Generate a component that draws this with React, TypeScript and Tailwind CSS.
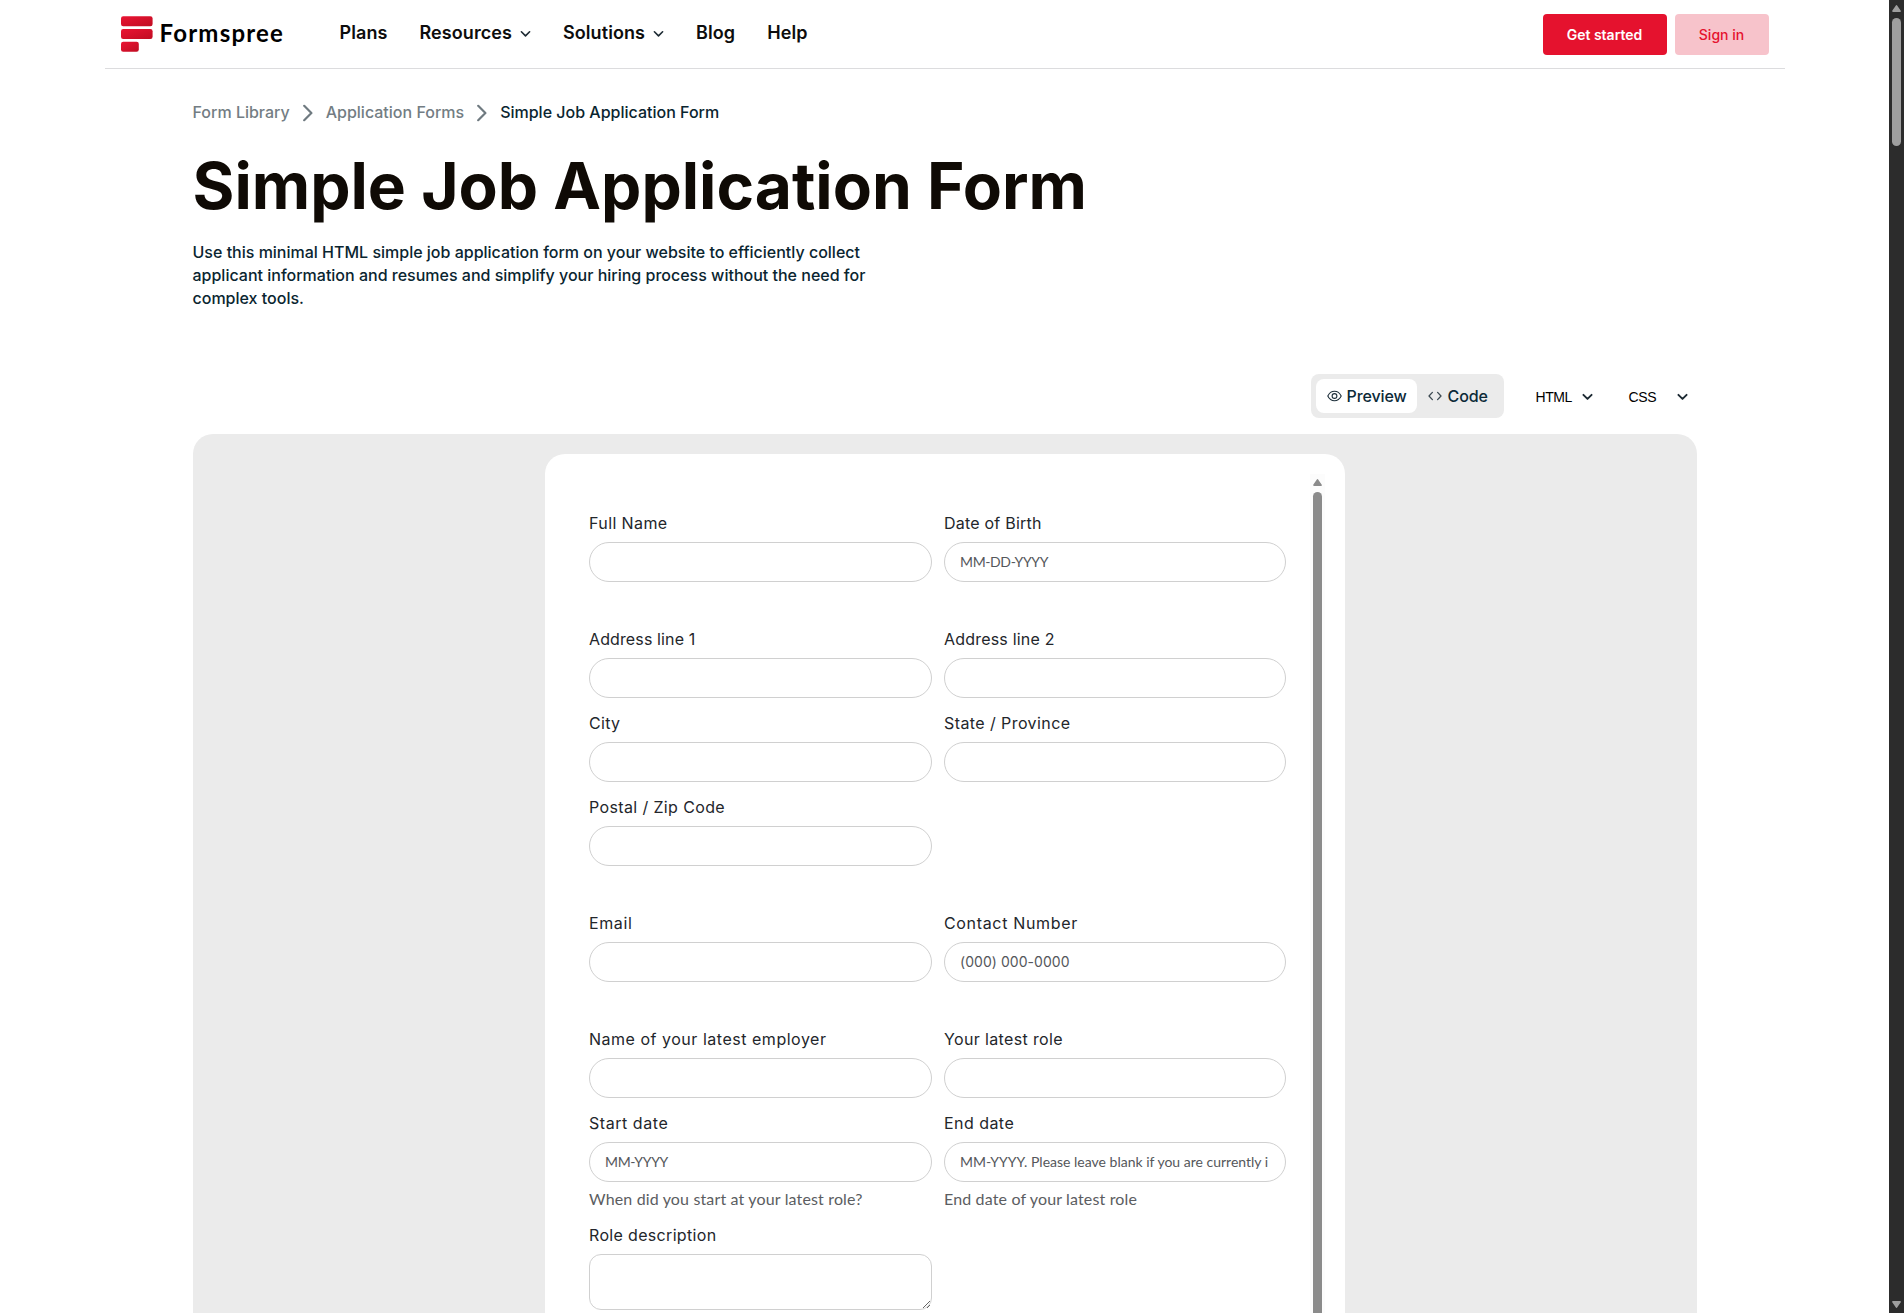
import type { ReactNode } from "react";

const inter = "font-['Inter',sans-serif]";

function Logo() {
  return (
    <div className="flex items-center">
      <svg width="32" height="36" viewBox="0 0 32 36" className="shrink-0">
        <defs>
          <linearGradient id="bar" x1="0" y1="0" x2="1" y2="1">
            <stop offset="0" stopColor="#ea1433" />
            <stop offset="1" stopColor="#c00d22" />
          </linearGradient>
        </defs>
        <rect x="0" y="0.2" width="31.6" height="10" rx="2.2" fill="url(#bar)" />
        <rect x="0" y="13" width="31.6" height="10" rx="2.2" fill="url(#bar)" />
        <rect x="0" y="25.7" width="17.8" height="10" rx="2.2" fill="url(#bar)" />
      </svg>
      <span className="-mt-[2px] ml-[7px] w-[124px] whitespace-nowrap font-['Lato',sans-serif] text-[24px] leading-[28px] font-bold tracking-[1.2px] text-black">
        Formspree
      </span>
    </div>
  );
}

function Chevron({ className, stroke = "#1d2a33", width = 1.6 }: { className?: string; stroke?: string; width?: number }) {
  return (
    <svg width="11" height="8" viewBox="0 0 11 8" fill="none" className={className}>
      <path d="M1.4 1.8 5.5 5.9 9.6 1.8" stroke={stroke} strokeWidth={width} strokeLinecap="round" strokeLinejoin="round" />
    </svg>
  );
}

function NavItem({ label, menu, className = "" }: { label: string; menu?: boolean; className?: string }) {
  return (
    <a className={`flex items-center text-[18px] leading-[28px] font-semibold tracking-[0.08px] text-[#0d0d0d] ${className}`}>
      {label}
      {menu && <Chevron className="mt-[2px] ml-2" />}
    </a>
  );
}

function Header() {
  return (
    <header className="mx-auto flex h-[69px] w-[1680px] items-start border-b border-[#dcdcde] px-4">
      <div className="mt-4">
        <Logo />
      </div>
      <nav className="mt-[19px] ml-[56px] flex gap-8">
        <NavItem label="Plans" />
        <NavItem label="Resources" menu />
        <NavItem label="Solutions" menu />
        <NavItem label="Blog" />
        <NavItem label="Help" />
      </nav>
      <div className="mt-[14px] ml-auto flex gap-2">
        <button className="h-[41px] w-[124px] rounded-[4px] bg-[#e5122e] text-sm font-semibold text-white">Get started</button>
        <button className="h-[41px] w-[94px] rounded-[4px] bg-[#f7c3cb] text-sm font-medium text-[#e5122e]">Sign in</button>
      </div>
    </header>
  );
}

function Crumb() {
  return (
    <svg width="10" height="18" viewBox="0 0 10 18" fill="none" className="mx-[13px] mt-[2px]">
      <path d="M1.2 1.8 8.4 9 1.2 16.2" stroke="#6f7a80" strokeWidth="2.2" strokeLinecap="round" strokeLinejoin="round" />
    </svg>
  );
}

function Toolbar() {
  return (
    <div className="mt-16 flex h-11 items-center justify-end">
      <div className="flex h-11 w-[193px] items-center rounded-lg bg-[#ebebeb] px-[5px]">
        <div className="flex h-[34px] w-[101px] items-center rounded-lg bg-white pb-[1px] pl-[11px] text-base font-medium tracking-[-0.1px] text-[#0c2a38]">
          <svg width="15" height="12" viewBox="0 0 15 12" fill="none" className="mr-[5px]" stroke="#1d2f3a" strokeWidth="1.1">
            <path d="M0.8 6C2.2 3 4.6 1.2 7.5 1.2S12.8 3 14.2 6C12.8 9 10.4 10.8 7.5 10.8S2.2 9 0.8 6Z" />
            <circle cx="7.5" cy="6" r="2.4" />
          </svg>
          Preview
        </div>
        <div className="flex h-[34px] items-center pb-[1px] pl-[11px] text-base font-medium tracking-[-0.1px] text-[#0c2a38]">
          <svg width="14" height="10" viewBox="0 0 14 10" fill="none" className="mr-[6px]" stroke="#3d4a52" strokeWidth="1.3" strokeLinecap="round" strokeLinejoin="round">
            <path d="M4.4 1.4 1 5l3.4 3.6M9.6 1.4 13 5 9.6 8.6" />
          </svg>
          Code
        </div>
      </div>
      <div className="mr-[9px] flex items-center pt-[1px] font-['Liberation_Sans',Arial,sans-serif] text-[14px] leading-[20px] tracking-[-0.4px] text-black">
        <div className="ml-[32px] flex w-[57px] items-center justify-between">
          HTML
          <Chevron width={1.9} />
        </div>
        <div className="ml-[36px] flex w-[59px] items-center justify-between">
          CSS
          <Chevron width={1.9} />
        </div>
      </div>
    </div>
  );
}

type FieldProps = {
  label: string;
  track: string;
  placeholder?: string;
  inputClass?: string;
  children?: ReactNode;
};

function Label({ text, track }: { text: string; track: string }) {
  return <label className={`block h-6 pt-[1px] leading-[24px] whitespace-nowrap text-[#23262b] ${track}`}>{text}</label>;
}

function Field({ label, track, placeholder, inputClass = "", children }: FieldProps) {
  return (
    <div>
      <Label text={label} track={track} />
      <input
        type="text"
        placeholder={placeholder}
        className={`mt-2 block h-10 w-full rounded-full border border-[#d0d0d0] bg-white pr-[17px] pb-[2px] pl-[15px] text-[14px] placeholder:text-[#55575b] ${inputClass}`}
      />
      {children}
    </div>
  );
}

function Group({ children }: { children: ReactNode }) {
  return <div className="grid grid-cols-[343px_342px] gap-3">{children}</div>;
}

function Help({ children }: { children: ReactNode }) {
  return (
    <p className="mt-[7px] mb-[1px] h-5 font-['Lato',sans-serif] text-[16px] leading-[20px] tracking-[0.15px] text-[#5b5d61]">
      {children}
    </p>
  );
}

function JobForm() {
  return (
    <form className="flex w-[745px] flex-col gap-[44px] pt-[36px] pr-[23.5px] pl-[24.5px]">
      <Group>
        <Field label="Full Name" track="tracking-[0.4px]" />
        <Field label="Date of Birth" track="tracking-[0.22px]" placeholder="MM-DD-YYYY" inputClass="font-['Lato',sans-serif] tracking-[-0.37px]" />
      </Group>
      <Group>
        <Field label="Address line 1" track="tracking-[0.12px]" />
        <Field label="Address line 2" track="tracking-[0.2px]" />
        <Field label="City" track="tracking-[0.3px]" />
        <Field label="State / Province" track="tracking-[0.42px]" />
        <Field label="Postal / Zip Code" track="tracking-[0.37px]" />
      </Group>
      <Group>
        <Field label="Email" track="tracking-[0.6px]" />
        <Field label="Contact Number" track="tracking-[0.66px]" placeholder="(000) 000-0000" inputClass="font-['Inter',sans-serif] tracking-[0.05px]" />
      </Group>
      <Group>
        <Field label="Name of your latest employer" track="tracking-[0.52px]" />
        <Field label="Your latest role" track="tracking-[0.36px]" />
        <Field label="Start date" track="tracking-[0.55px]" placeholder="MM-YYYY" inputClass="font-['Lato',sans-serif] tracking-[-0.32px]">
          <Help>When did you start at your latest role?</Help>
        </Field>
        <Field
          label="End date"
          track="tracking-[0.45px]"
          placeholder="MM-YYYY. Please leave blank if you are currently i"
          inputClass="font-['Lato',sans-serif]"
        >
          <Help>End date of your latest role</Help>
        </Field>
        <div>
          <Label text="Role description" track="tracking-[0.33px]" />
          <textarea className="mt-2 block h-14 w-full resize rounded-xl border border-[#d0d0d0] bg-white px-[15px]" />
        </div>
      </Group>
    </form>
  );
}

function Arrow({ color, down }: { color: string; down?: boolean }) {
  return (
    <svg width="9" height="7" viewBox="0 0 9 7" className={down ? "rotate-180" : ""}>
      <path d="M4.5 0.9 8.1 6.1H0.9Z" fill={color} stroke={color} strokeWidth="1.6" strokeLinejoin="round" />
    </svg>
  );
}

export default function App() {
  return (
    <div className={`flex h-[1313px] w-[1904px] overflow-hidden bg-white ${inter}`}>
      <div className="w-[1889px] shrink-0">
        <Header />
        <main className="mx-auto w-[1504px]">
          <div className="mt-[31px] flex h-6 items-center text-base font-medium text-[#737d83]">
            <span>Form Library</span>
            <Crumb />
            <span>Application Forms</span>
            <Crumb />
            <span className="text-[#0a2530]">Simple Job Application Form</span>
          </div>
          <h1 className="mt-[30px] text-[64px] leading-[64px] font-bold text-[#0f0a05]">Simple Job Application Form</h1>
          <p className="mt-[23px] w-[700px] text-base leading-[23px] font-medium text-[#0a2530]">
            Use this minimal HTML simple job application form on your website to efficiently collect
            <br />
            applicant information and resumes and simplify your hiring process without the need for
            <br />
            complex tools.
          </p>
          <Toolbar />
          <section className="mt-4 flex h-[900px] justify-center rounded-t-[20px] bg-[#ebebeb] pt-5">
            <div className="flex w-[800px] rounded-t-[20px] bg-white px-5 pt-5">
              <JobForm />
              <div className="flex w-[15px] flex-col items-center bg-[#fcfcfc] pt-[5px]">
                <Arrow color="#8b8b8b" />
                <div className="mt-[6px] w-[9px] flex-1 rounded-t-full bg-[#8b8b8b]" />
              </div>
            </div>
          </section>
        </main>
      </div>
      <div className="flex w-[15px] flex-col items-center bg-[#2c2c2c] py-[5px]">
        <Arrow color="#9f9f9f" />
        <div className="mt-[6px] h-[128px] w-[9px] rounded-full bg-[#9f9f9f]" />
        <div className="mt-auto">
          <Arrow color="#9f9f9f" down />
        </div>
      </div>
    </div>
  );
}
